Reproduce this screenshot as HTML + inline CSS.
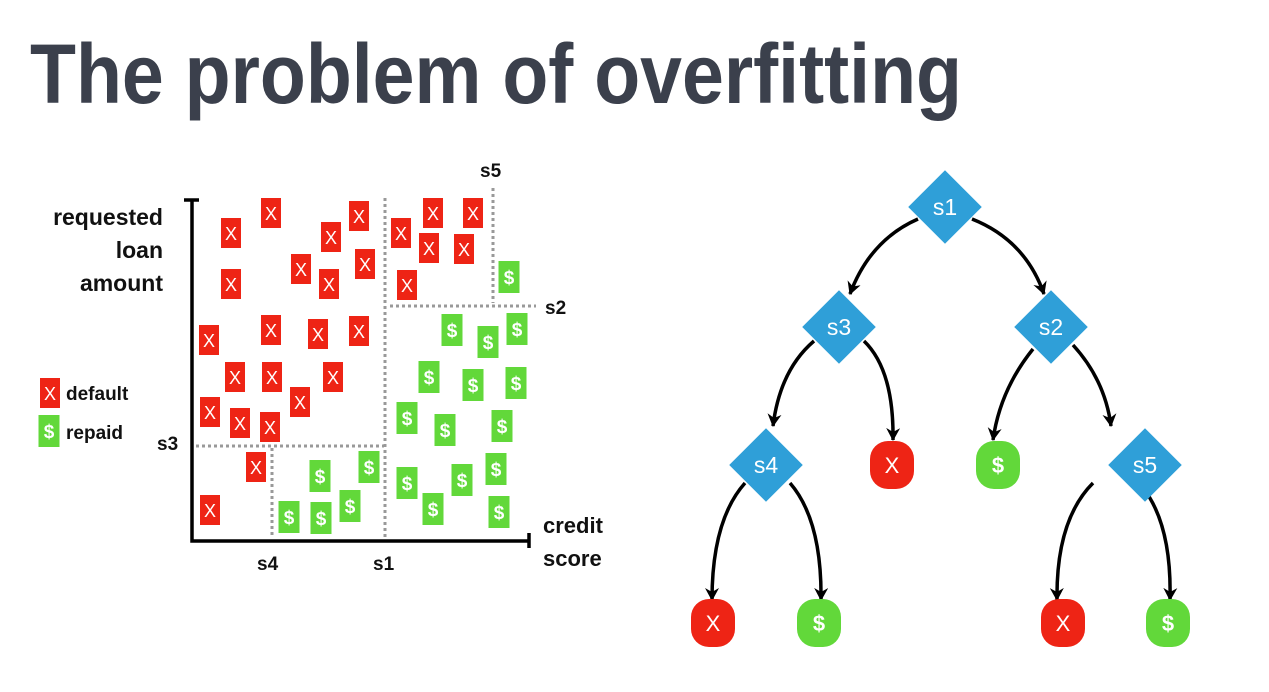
<!DOCTYPE html>
<html><head><meta charset="utf-8"><style>
html,body{margin:0;padding:0;background:#fff;width:1269px;height:692px;overflow:hidden}
svg{display:block;font-family:"Liberation Sans",sans-serif}
</style></head><body>
<svg width="1269" height="692" viewBox="0 0 1269 692" xmlns="http://www.w3.org/2000/svg">
<defs>
<g id="rx"><rect x="-10" y="-15" width="20" height="30" fill="#ee2415"/><text x="0" y="7" font-size="18" fill="#fff" text-anchor="middle">X</text></g>
<g id="gd"><rect x="-10.5" y="-16" width="21" height="32" fill="#62d83a"/><text x="0" y="7" font-size="19" fill="#fff" text-anchor="middle" font-weight="bold">$</text></g>
<marker id="ah" markerWidth="16" markerHeight="16" refX="12" refY="7" orient="auto" markerUnits="userSpaceOnUse"><path d="M0,0 L13,7 L0,14 L4,7 Z" fill="#000"/></marker>
</defs>
<text x="30" y="103" font-size="84" font-weight="bold" fill="#3b404c" textLength="932" lengthAdjust="spacingAndGlyphs">The problem of overfitting</text>

<g font-size="23" fill="#111" text-anchor="end" font-weight="bold">
<text x="163" y="225">requested</text><text x="163" y="258">loan</text><text x="163" y="291">amount</text>
</g>
<use href="#rx" x="50" y="393"/><use href="#gd" x="49" y="431"/>
<g font-size="19" fill="#111" font-weight="bold">
<text x="66" y="400">default</text><text x="66" y="439">repaid</text>
<text x="157" y="450">s3</text><text x="257" y="570">s4</text><text x="373" y="570">s1</text>
<text x="480" y="177">s5</text><text x="545" y="314">s2</text>
<text x="543" y="533" font-size="22">credit</text><text x="543" y="566" font-size="22">score</text>
</g>

<g stroke="#999" stroke-width="3" stroke-dasharray="3 3" fill="none">
<line x1="385" y1="198" x2="385" y2="537"/>
<line x1="493" y1="188" x2="493" y2="303"/>
<line x1="390" y1="306" x2="536" y2="306"/>
<line x1="196" y1="446" x2="384" y2="446"/>
<line x1="272" y1="448" x2="272" y2="538"/>
</g>
<g stroke="#000" stroke-width="3.5" fill="none">
<path d="M192 200 V541 H529"/><path d="M184 200 H199"/><path d="M529 533 V548"/>
</g>

<use href="#rx" x="231" y="233"/><use href="#rx" x="271" y="213"/><use href="#rx" x="231" y="284"/><use href="#rx" x="331" y="237"/><use href="#rx" x="359" y="216"/><use href="#rx" x="301" y="269"/><use href="#rx" x="329" y="284"/><use href="#rx" x="365" y="264"/><use href="#rx" x="401" y="233"/><use href="#rx" x="433" y="213"/><use href="#rx" x="473" y="213"/><use href="#rx" x="429" y="248"/><use href="#rx" x="464" y="249"/><use href="#rx" x="407" y="285"/><use href="#rx" x="209" y="340"/><use href="#rx" x="271" y="330"/><use href="#rx" x="318" y="334"/><use href="#rx" x="359" y="331"/><use href="#rx" x="235" y="377"/><use href="#rx" x="272" y="377"/><use href="#rx" x="333" y="377"/><use href="#rx" x="300" y="402"/><use href="#rx" x="210" y="412"/><use href="#rx" x="240" y="423"/><use href="#rx" x="270" y="427"/><use href="#rx" x="256" y="467"/><use href="#rx" x="210" y="510"/>

<use href="#gd" x="509" y="277"/><use href="#gd" x="452" y="330"/><use href="#gd" x="488" y="342"/><use href="#gd" x="517" y="329"/><use href="#gd" x="429" y="377"/><use href="#gd" x="473" y="385"/><use href="#gd" x="516" y="383"/><use href="#gd" x="407" y="418"/><use href="#gd" x="445" y="430"/><use href="#gd" x="502" y="426"/><use href="#gd" x="320" y="476"/><use href="#gd" x="369" y="467"/><use href="#gd" x="407" y="483"/><use href="#gd" x="462" y="480"/><use href="#gd" x="496" y="469"/><use href="#gd" x="289" y="517"/><use href="#gd" x="321" y="518"/><use href="#gd" x="350" y="506"/><use href="#gd" x="433" y="509"/><use href="#gd" x="499" y="512"/>

<g stroke="#000" stroke-width="3.5" fill="none" marker-end="url(#ah)">
<path d="M918 219 Q870 240 850 294"/>
<path d="M972 219 Q1025 240 1044 294"/>
<path d="M814 341 Q780 370 773 426"/>
<path d="M864 341 Q894 370 893 440"/>
<path d="M1033 349 Q1000 390 993 440"/>
<path d="M1073 345 Q1105 380 1111 426"/>
<path d="M745 483 Q712 520 712 600"/>
<path d="M790 483 Q822 520 821 600"/>
<path d="M1093 483 Q1056 520 1057 600"/>
<path d="M1139 483 Q1172 520 1170 600"/>
</g>

<g fill="#2f9fd8">
<rect x="919" y="181" width="52" height="52" transform="rotate(45 945 207)"/>
<rect x="813" y="301" width="52" height="52" transform="rotate(45 839 327)"/>
<rect x="1025" y="301" width="52" height="52" transform="rotate(45 1051 327)"/>
<rect x="740" y="439" width="52" height="52" transform="rotate(45 766 465)"/>
<rect x="1119" y="439" width="52" height="52" transform="rotate(45 1145 465)"/>
</g>
<g fill="#fff" font-size="23" text-anchor="middle">
<text x="945" y="215">s1</text><text x="839" y="335">s3</text><text x="1051" y="335">s2</text><text x="766" y="473">s4</text><text x="1145" y="473">s5</text>
</g>
<g>
<rect x="870" y="441" width="44" height="48" rx="18" fill="#ee2415"/>
<rect x="976" y="441" width="44" height="48" rx="18" fill="#62d83a"/>
<rect x="691" y="599" width="44" height="48" rx="18" fill="#ee2415"/>
<rect x="797" y="599" width="44" height="48" rx="18" fill="#62d83a"/>
<rect x="1041" y="599" width="44" height="48" rx="18" fill="#ee2415"/>
<rect x="1146" y="599" width="44" height="48" rx="18" fill="#62d83a"/>
</g>
<g fill="#fff" font-size="22" text-anchor="middle">
<text x="892" y="473">X</text><text x="998" y="473" font-weight="bold">$</text>
<text x="713" y="631">X</text><text x="819" y="631" font-weight="bold">$</text>
<text x="1063" y="631">X</text><text x="1168" y="631" font-weight="bold">$</text>
</g>
</svg>
</body></html>
